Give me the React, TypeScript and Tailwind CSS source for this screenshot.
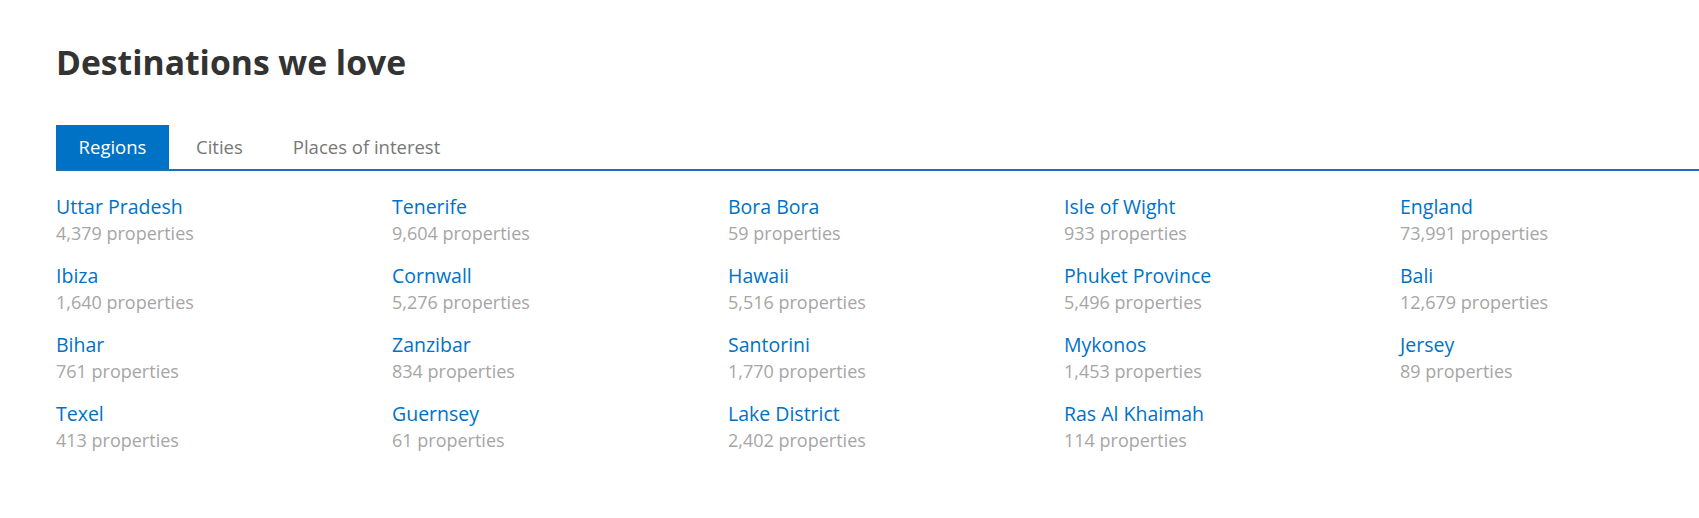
import React from "react";

const columns: { name: string; count: string }[][] = [
  [
    { name: "Uttar Pradesh", count: "4,379 properties" },
    { name: "Ibiza", count: "1,640 properties" },
    { name: "Bihar", count: "761 properties" },
    { name: "Texel", count: "413 properties" },
  ],
  [
    { name: "Tenerife", count: "9,604 properties" },
    { name: "Cornwall", count: "5,276 properties" },
    { name: "Zanzibar", count: "834 properties" },
    { name: "Guernsey", count: "61 properties" },
  ],
  [
    { name: "Bora Bora", count: "59 properties" },
    { name: "Hawaii", count: "5,516 properties" },
    { name: "Santorini", count: "1,770 properties" },
    { name: "Lake District", count: "2,402 properties" },
  ],
  [
    { name: "Isle of Wight", count: "933 properties" },
    { name: "Phuket Province", count: "5,496 properties" },
    { name: "Mykonos", count: "1,453 properties" },
    { name: "Ras Al Khaimah", count: "114 properties" },
  ],
  [
    { name: "England", count: "73,991 properties" },
    { name: "Bali", count: "12,679 properties" },
    { name: "Jersey", count: "89 properties" },
  ],
];

export default function App() {
  return (
    <div
      className="min-h-[518px] w-full overflow-hidden bg-white pl-[56px] pt-[40px]"
      style={{ fontFamily: '"Open Sans", "Noto Sans", sans-serif' }}
    >
      <h1 className="text-[33.7px] font-bold leading-[44px] text-[#333333]">Destinations we love</h1>
      <div className="mt-[41px] flex border-b-2 border-[#1f6fb6]">
        <div className="flex h-[44px] w-[113px] items-center justify-center bg-[#0072c6] text-[18.5px] text-white">
          Regions
        </div>
        <div className="flex h-[44px] items-center pl-[27px] pr-[26px] text-[18.5px] text-[#777777]">Cities</div>
        <div className="flex h-[44px] items-center pl-[24px] text-[18.5px] text-[#777777]">Places of interest</div>
      </div>
      <div className="mt-[22px] flex">
        {columns.map((col, i) => (
          <div key={i} className="flex w-[336px] shrink-0 flex-col gap-[17px]">
            {col.map((item) => (
              <div key={item.name} className="flex flex-col">
                <a className="cursor-pointer text-[19.5px] leading-[28px] text-[#0072c6]">{item.name}</a>
                <span className="text-[18px] leading-[24px] text-[#a6a6a6]">{item.count}</span>
              </div>
            ))}
          </div>
        ))}
      </div>
    </div>
  );
}
